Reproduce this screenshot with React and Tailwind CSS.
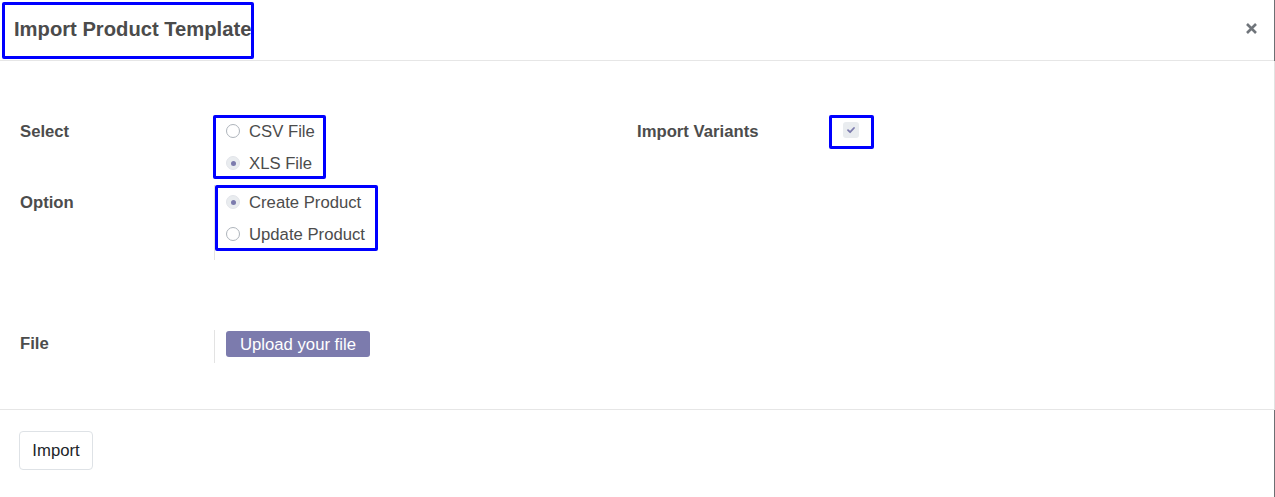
const font = { fontFamily: '"Liberation Sans", Arial, sans-serif' };

function Radio({ checked, label }) {
  return (
    <label className="flex h-[26px] items-center gap-[9px] text-[16.7px] whitespace-nowrap text-[#4c4c4c]">
      {checked ? (
        <span className="flex h-[14px] w-[14px] items-center justify-center rounded-full border border-[#e3e5ea] bg-[#e9ecef]">
          <span className="h-[5px] w-[5px] rounded-full bg-[#7c7bad]" />
        </span>
      ) : (
        <span className="h-[14px] w-[14px] rounded-full border border-[#aeb4bb] bg-white" />
      )}
      <span className="translate-y-px">{label}</span>
    </label>
  );
}

function Label({ children }) {
  return (
    <div className="flex h-[26px] items-center text-[16.7px] font-bold whitespace-nowrap text-[#4c4c4c]">
      <span className="translate-y-px">{children}</span>
    </div>
  );
}

export default function App() {
  return (
    <div className="flex h-[497px] w-[1275px] bg-white" style={font}>
      <div className="flex w-[1274px] flex-col">
        {/* header */}
        <div className="flex h-[61px] items-start justify-between border-b border-[#e6e6e6]">
          <div className="mt-[2px] ml-[2px] flex h-[57px] w-[252px] items-center rounded-[2px] border-[3px] border-[#0000ff] pb-[3px] pl-[9px]">
            <h1 className="text-[20.2px] font-bold whitespace-nowrap text-[#4b4b4b]">Import Product Template</h1>
          </div>
          <button className="mt-[23px] mr-[17px]">
            <svg width="11" height="11" viewBox="0 0 11 11">
              <path d="M1 1 L10 10 M10 1 L1 10" stroke="#70757b" strokeWidth="2.6" strokeLinecap="butt" />
            </svg>
          </button>
        </div>

        {/* body */}
        <div className="flex h-[348px] flex-col pl-[20px]">
          <div className="mt-[54px] flex">
            <div className="w-[193px] pt-[3px]">
              <Label>Select</Label>
            </div>
            <div className="w-[424px]">
              <div className="flex w-[113px] flex-col gap-[6px] rounded-[2px] border-[3px] border-[#0000ff] pl-[10px]">
                <Radio label="CSV File" />
                <Radio label="XLS File" checked />
              </div>
            </div>
            <div className="w-[192px] pt-[3px]">
              <Label>Import Variants</Label>
            </div>
            <div className="h-[34px] w-[45px] rounded-[2px] border-[3px] border-[#0000ff] pt-[4px] pl-[11px]">
              <span className="flex h-[16px] w-[16px] items-center justify-center rounded-[3px] bg-[#e9ecef]">
                <svg width="10" height="10" viewBox="0 0 10 10">
                  <path d="M2 5.2 L4.1 7.2 L8 3" fill="none" stroke="#7c7bad" strokeWidth="1.8" strokeLinecap="round" strokeLinejoin="round" />
                </svg>
              </span>
            </div>
          </div>

          <div className="mt-[6px] flex">
            <div className="w-[194px] pt-[4px]">
              <Label>Option</Label>
            </div>
            <div className="border-l border-[#e3e3e3] pb-[9px]">
              <div className="flex w-[163px] flex-col gap-[6px] rounded-[2px] border-[3px] border-[#0000ff] py-[1px] pl-[8px]">
                <Radio label="Create Product" checked />
                <Radio label="Update Product" />
              </div>
            </div>
          </div>

          <div className="mt-[70px] flex">
            <div className="w-[194px]">
              <Label>File</Label>
            </div>
            <div className="h-[33px] border-l border-[#e3e3e3] pt-[1px] pl-[11px]">
              <button className="h-[26px] rounded-[3px] bg-[#7c7bad] px-[14px] pt-px text-[16.7px] text-white">
                Upload your file
              </button>
            </div>
          </div>
        </div>

        {/* footer */}
        <div className="flex-1 border-t border-[#e6e6e6] pt-[21px] pl-[19px]">
          <button className="h-[39px] w-[74px] rounded-[4px] border border-[#dee2e6] bg-white text-[16.7px] text-[#212529]">
            Import
          </button>
        </div>
      </div>
      <div className="flex w-px flex-col">
        <div className="h-[61px] bg-[#6c6f73]" />
        <div className="h-[349px] bg-[#e2e2e2]" />
        <div className="flex-1 bg-[#6c6f73]" />
      </div>
    </div>
  );
}
